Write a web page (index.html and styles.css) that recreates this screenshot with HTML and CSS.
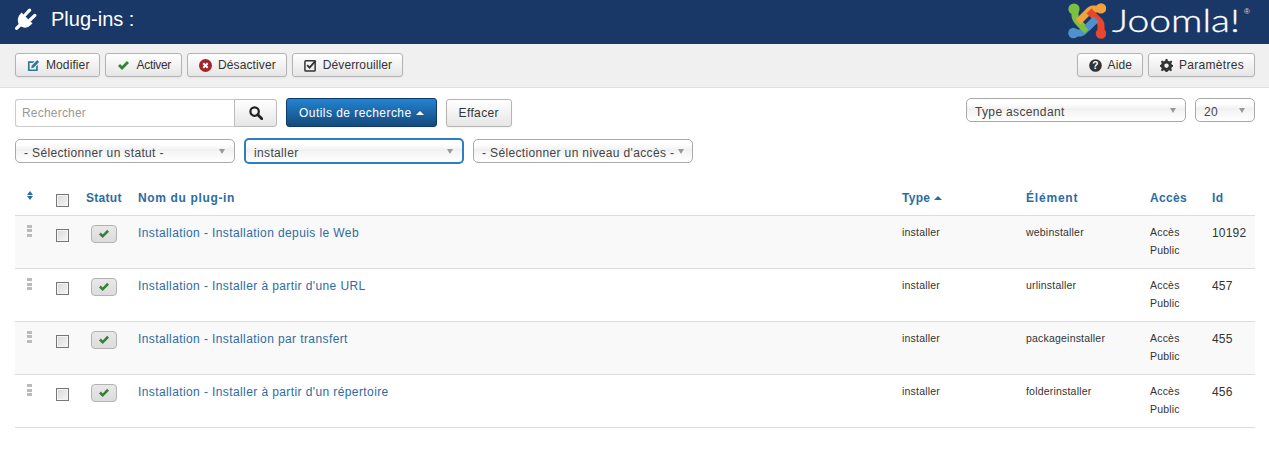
FILE: index.html
```html
<!DOCTYPE html>
<html lang="fr">
<head>
<meta charset="utf-8">
<title>Plug-ins</title>
<link rel="stylesheet" href="styles.css">
</head>
<body>
<svg class="defs" width="0" height="0" aria-hidden="true">
  <symbol id="i-check" viewBox="0 0 14 12"><path d="M1 6.5 L3.2 4.3 L5.4 6.5 L10.8 1 L13 3.2 L5.4 10.8 Z" fill="currentColor"/></symbol>
</svg>
<header class="topbar">
  <div class="title">
    <svg class="plug" width="22" height="22" viewBox="0 0 22 22">
      <path d="M6.5 4.5 L17.5 15.5 L14.5 18 C11.5 20.5 7.5 20 5 17.5 C2.5 15 2 11 4.2 7.5 Z" fill="#fff"/>
      <path d="M5 17 L1.6 20.4" stroke="#fff" stroke-width="3.2" stroke-linecap="round"/>
      <path d="M10 7 L14.6 2.2 M15 12 L19.8 7.4" stroke="#fff" stroke-width="3.2" stroke-linecap="round"/>
    </svg>
    <h1>Plug-ins :</h1>
  </div>
  <div class="logo">
    <svg width="38" height="36" viewBox="0 0 38 36">
      <g fill="none" stroke-width="7">
        <path d="M14 30 L5 30 M12 30 C15 30 17 27 19 25 L28 16" stroke="#5091cd"/>
        <path d="M7 6 L7 13 C7 16 10 19 12 21 L19 28" stroke="#7ac143"/>
        <path d="M33 6 L25 6 C22 6 20 9 18 11 L10 19" stroke="#f1a13d"/>
        <path d="M33 30 L33 22 C33 19 30 17 28 15 L21 8" stroke="#e8472e"/>
        <path d="M19 25 L28 16" stroke="#5091cd"/>
      </g>
      <circle cx="6" cy="6" r="5.6" fill="#7ac143"/>
      <circle cx="33" cy="5.4" r="5.2" fill="#f1a13d"/>
      <circle cx="33" cy="30.5" r="5.2" fill="#e8472e"/>
      <circle cx="5.4" cy="30" r="5.2" fill="#5091cd"/>
    </svg>
    <span class="wordmark">Joomla!</span><sup class="reg">®</sup>
  </div>
</header>

<nav class="toolbar">
  <div class="group">
    <button class="btn"><svg class="ico" width="13" height="13" viewBox="0 0 14 14"><path d="M1 2.5 H8 L6.4 4.2 H2.8 V11.2 H9.8 V8 L11.6 6.2 V13 H1 Z" fill="#2b7a96"/><path d="M5 7.4 L11 1.2 L13 3.2 L7 9.4 L4.6 9.8 Z" fill="#2b7a96"/></svg>Modifier</button>
    <button class="btn btn-tight"><svg class="ico ok" width="13" height="11"><use href="#i-check"/></svg>Activer</button>
    <button class="btn"><svg class="ico" width="13" height="13" viewBox="0 0 14 14"><circle cx="7" cy="7" r="7" fill="#a2252c"/><path d="M4.6 4.6 L9.4 9.4 M9.4 4.6 L4.6 9.4" stroke="#fff" stroke-width="2.2"/></svg>Désactiver</button>
    <button class="btn"><svg class="ico" width="13" height="13" viewBox="0 0 14 14"><rect x="1" y="2" width="11" height="11" rx="1" fill="none" stroke="#333" stroke-width="1.6"/><path d="M3.4 6.6 L6 9.2 L12.6 1.8" fill="none" stroke="#333" stroke-width="2"/></svg>Déverrouiller</button>
  </div>
  <div class="group">
    <button class="btn"><svg class="ico" width="13" height="13" viewBox="0 0 14 14"><circle cx="7" cy="7" r="6.8" fill="#333"/><text x="7" y="11" text-anchor="middle" class="qmark">?</text></svg>Aide</button>
    <button class="btn btn-wide"><svg class="ico" width="13" height="13" viewBox="0 0 14 14"><path d="M6 0 H8 L8.4 2 L10.2 2.8 L12 1.7 L13.2 3 L12.1 4.7 L12.9 6.2 L14 6.5 V8.3 L12.9 8.7 L12.1 10.3 L12.9 12 L11.6 13.2 L10 12.2 L8.4 13 L8 14 H6 L5.6 13 L4 12.2 L2.2 13.2 L1 12 L1.9 10.3 L1.1 8.7 L0 8.3 V6.5 L1.1 6.2 L1.9 4.7 L1 3 L2.2 1.7 L4 2.8 L5.6 2 Z M7 4.8 A2.4 2.4 0 1 0 7.01 4.8 Z" fill="#333" fill-rule="evenodd"/></svg>Paramètres</button>
  </div>
</nav>

<main class="content">
  <div class="filters">
    <div class="filters-left">
      <div class="search">
        <div class="search-input">Rechercher</div>
        <button class="search-btn" aria-label="Rechercher"><svg width="14" height="14" viewBox="0 0 14 14"><circle cx="5.6" cy="5.6" r="4.2" fill="none" stroke="#222" stroke-width="2.2"/><path d="M8.8 8.8 L12.8 12.8" stroke="#222" stroke-width="2.8" stroke-linecap="round"/></svg></button>
      </div>
      <button class="btn btn-primary">Outils de recherche<span class="caret-up light"></span></button>
      <button class="btn btn-clear">Effacer</button>
    </div>
    <div class="filters-right">
      <div class="select sel-sort"><span>Type ascendant</span></div>
      <div class="select sel-limit"><span>20</span></div>
    </div>
  </div>
  <div class="filters-row2">
    <div class="select sel-status"><span>- Sélectionner un statut -</span></div>
    <div class="select sel-type focus"><span>installer</span></div>
    <div class="select sel-access"><span>- Sélectionner un niveau d'accès -</span></div>
  </div>

  <table class="list">
    <thead>
      <tr>
        <th class="c-order"><span class="sort-icon"></span></th>
        <th class="c-check"><span class="checkbox"></span></th>
        <th class="c-status">Statut</th>
        <th class="c-name">Nom du plug-in</th>
        <th class="c-type">Type<span class="caret-up"></span></th>
        <th class="c-elem">Élément</th>
        <th class="c-access">Accès</th>
        <th class="c-id">Id</th>
      </tr>
    </thead>
    <tbody>
      <tr>
        <td class="c-order"><span class="drag"></span></td>
        <td class="c-check"><span class="checkbox"></span></td>
        <td class="c-status"><span class="state"><svg class="ok" width="12" height="10"><use href="#i-check"/></svg></span></td>
        <td class="c-name"><a>Installation - Installation depuis le Web</a></td>
        <td class="small">installer</td>
        <td class="small">webinstaller</td>
        <td class="small">Accès Public</td>
        <td class="id">10192</td>
      </tr>
      <tr>
        <td class="c-order"><span class="drag"></span></td>
        <td class="c-check"><span class="checkbox"></span></td>
        <td class="c-status"><span class="state"><svg class="ok" width="12" height="10"><use href="#i-check"/></svg></span></td>
        <td class="c-name"><a>Installation - Installer à partir d'une URL</a></td>
        <td class="small">installer</td>
        <td class="small">urlinstaller</td>
        <td class="small">Accès Public</td>
        <td class="id">457</td>
      </tr>
      <tr>
        <td class="c-order"><span class="drag"></span></td>
        <td class="c-check"><span class="checkbox"></span></td>
        <td class="c-status"><span class="state"><svg class="ok" width="12" height="10"><use href="#i-check"/></svg></span></td>
        <td class="c-name"><a>Installation - Installation par transfert</a></td>
        <td class="small">installer</td>
        <td class="small">packageinstaller</td>
        <td class="small">Accès Public</td>
        <td class="id">455</td>
      </tr>
      <tr>
        <td class="c-order"><span class="drag"></span></td>
        <td class="c-check"><span class="checkbox"></span></td>
        <td class="c-status"><span class="state"><svg class="ok" width="12" height="10"><use href="#i-check"/></svg></span></td>
        <td class="c-name"><a>Installation - Installer à partir d'un répertoire</a></td>
        <td class="small">installer</td>
        <td class="small">folderinstaller</td>
        <td class="small">Accès Public</td>
        <td class="id">456</td>
      </tr>
    </tbody>
  </table>
</main>
</body>
</html>
```
FILE: styles.css
```css
* { box-sizing: border-box; }
html, body { margin: 0; padding: 0; }
body {
  background: #fff;
  color: #333;
  font-family: "Liberation Sans", Arial, sans-serif;
  font-size: 12px;
  line-height: 18px;
  letter-spacing: 0.2px;
  height: 452px;
  overflow: hidden;
}
.defs { position: absolute; }
.ok { color: #378137; }

.topbar {
  height: 44px;
  background: #1a3867;
  display: flex;
  justify-content: space-between;
  padding: 0 19px 0 15px;
}
.title { display: flex; align-items: center; gap: 14px; height: 44px; padding-bottom: 6px; }
.title h1 {
  margin: 0;
  color: #fff;
  font-size: 20px;
  font-weight: 400;
  letter-spacing: 0;
  line-height: 24px;
}
.logo { display: flex; align-items: flex-start; padding-top: 3px; color: #fff; }
.logo svg { margin-right: 6px; }
.wordmark {
  display: block;
  width: 131px;
  margin-top: -1px;
  font-family: Lato, "Open Sans", sans-serif;
  font-weight: 300;
  font-size: 31px;
  line-height: 36px;
  letter-spacing: 0;
  -webkit-text-stroke: 0.3px #fff;
  transform: scaleX(1.26);
  transform-origin: left center;
}
.reg { font-size: 8px; line-height: 10px; margin: 4px 0 0 1px; color: #ddd; letter-spacing: 0; }

.toolbar {
  height: 44px;
  background: #f0f0f0;
  border-bottom: 1px solid #e0e0e0;
  display: flex;
  justify-content: space-between;
  padding: 9px 14px 0 15px;
}
.group { display: flex; gap: 5px; }

.btn {
  height: 24px;
  padding: 0 10px 0 11px;
  display: inline-flex;
  align-items: center;
  border: 1px solid #b3b3b3;
  border-radius: 3px;
  background: linear-gradient(#fff, #e6e6e6);
  box-shadow: 0 1px 2px rgba(0,0,0,.05);
  color: #333;
  font: inherit;
  letter-spacing: 0.1px;
}
.btn-tight { letter-spacing: -0.3px; }
.btn-wide { letter-spacing: 0.3px; }
.ico { margin-right: 6px; flex: none; }
.qmark { font: bold 11px "Liberation Sans", sans-serif; fill: #fff; }

.content { padding: 10px 14px 0 15px; }
.filters { display: flex; justify-content: space-between; height: 30px; }
.filters-left { display: flex; align-items: flex-start; }
.filters-right { display: flex; gap: 9px; }

.search { display: flex; height: 28px; margin-top: 1px; }
.search-input {
  width: 219px;
  border: 1px solid #ccc;
  border-right: 0;
  border-radius: 3px 0 0 3px;
  background: #fff;
  color: #999;
  padding: 4px 6px;
  line-height: 18px;
}
.search-btn {
  width: 43px;
  border: 1px solid #bbb;
  border-radius: 0 3px 3px 0;
  background: linear-gradient(#fff, #e6e6e6);
  padding: 0;
  display: flex;
  align-items: center;
  justify-content: center;
}
.btn-primary {
  height: 29px;
  margin-left: 9px;
  padding: 0 12px;
  color: #fff;
  border-color: #0d3a6b;
  background: linear-gradient(#2384d3, #15497c);
  letter-spacing: 0.45px;
}
.btn-clear { height: 28px; margin-left: 9px; margin-top: 1px; padding: 0 12px; letter-spacing: 0.35px; }

.caret-up {
  display: inline-block;
  width: 0;
  height: 0;
  margin-left: 4px;
  border-left: 4px solid transparent;
  border-right: 4px solid transparent;
  border-bottom: 4px solid #2d6ca2;
  vertical-align: 2px;
}
.caret-up.light { border-bottom-color: #fff; }

.select {
  position: relative;
  height: 24px;
  border: 1px solid #aaa;
  border-radius: 5px;
  background: linear-gradient(#fff 20%, #eee 50%, #f4f4f4 52%, #fff);
  padding: 4px 8px 0;
  color: #444;
  white-space: nowrap;
  font-size: 12px;
  letter-spacing: 0.35px;
}
.select::after {
  content: "";
  position: absolute;
  right: 9px;
  top: 9px;
  border-left: 3.5px solid transparent;
  border-right: 3.5px solid transparent;
  border-top: 5px solid #999;
}
.sel-sort { width: 220px; }
.sel-limit { width: 60px; }
.filters-row2 { display: flex; align-items: flex-start; gap: 9px; height: 25px; margin-top: 11px; }
.sel-status { width: 220px; }
.sel-type { width: 220px; height: 26px; margin-top: -1px; border: 2px solid #2d7fc0; }
.sel-access { width: 220px; }
.sel-access::after { right: 8px; }

.list {
  width: 1240px;
  border-collapse: collapse;
  table-layout: fixed;
  margin-top: 16px;
}
.list th {
  height: 35px;
  padding: 2px 8px 0;
  text-align: left;
  color: #2d6ca2;
  font-size: 12px;
  font-weight: 700;
  border-bottom: 1px solid #ddd;
  letter-spacing: 0.3px;
}
.list th.c-name { letter-spacing: 0.65px; }
.list th.c-elem { letter-spacing: 0.8px; }
.list td {
  height: 53px;
  padding: 8px;
  vertical-align: top;
  border-bottom: 1px solid #ddd;
}
.list tbody tr:nth-child(odd) td { background: #f9f9f9; }
.list a { color: #2d6ca2; letter-spacing: 0.4px; }
.c-order { width: 32px; }
.c-check { width: 31px; }
.c-status { width: 52px; }
.c-name { width: 764px; }
.c-type { width: 124px; }
.c-elem { width: 124px; }
.c-access { width: 62px; }
.c-id { width: 51px; }
.list td.small { font-size: 10.5px; padding-top: 7px; }
.id { font-size: 12px; }
.list th.c-order { padding: 0 8px 4px 10px; }
.list th.c-check { padding: 7px 0 0 9px; }
.list td.c-check { padding: 13px 0 0 9px; }

.checkbox {
  display: block;
  width: 13px;
  height: 13px;
  border: 1px solid #777;
  background: linear-gradient(135deg, #d9d9d9, #f6f6f6);
  box-shadow: inset 0 0 0 1px #f4f4f4;
}
.sort-icon { display: block; position: relative; width: 7px; height: 9px; margin-left: 2px; }
.sort-icon::before, .sort-icon::after {
  content: "";
  position: absolute;
  left: 0;
  border-left: 3.5px solid transparent;
  border-right: 3.5px solid transparent;
}
.sort-icon::before { top: 0; border-bottom: 4px solid #2d6ca2; }
.sort-icon::after { bottom: 0; border-top: 4px solid #2d6ca2; }
.drag {
  display: block;
  width: 5px;
  height: 12px;
  margin: 1px 0 0 4px;
  background: repeating-linear-gradient(#bbb 0 3px, transparent 3px 4.5px);
}
.state {
  display: flex;
  align-items: center;
  justify-content: center;
  width: 26px;
  height: 18px;
  margin: 1px 0 0 5px;
  border: 1px solid #b3b3b3;
  border-radius: 4px;
  background: linear-gradient(#e8e8e8, #dcdcdc);
}
```
